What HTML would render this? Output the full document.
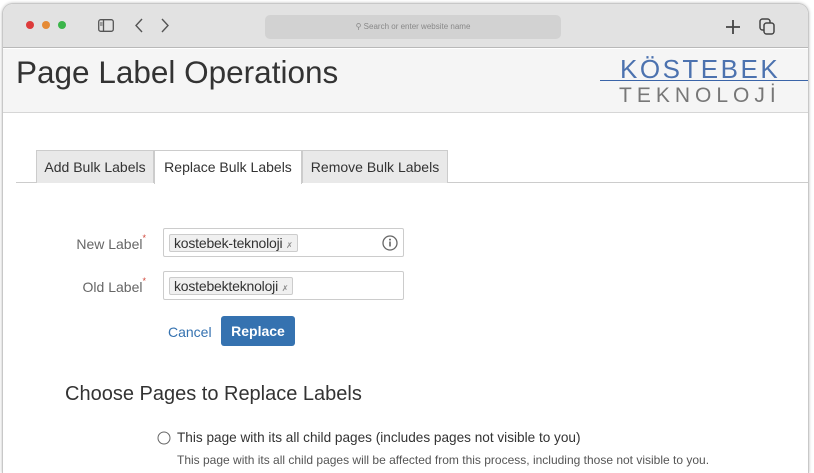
<!DOCTYPE html>
<html><head><meta charset="utf-8"><style>
*{margin:0;padding:0;box-sizing:border-box}
body{width:814px;height:463px;overflow:hidden;background:#fff;font-family:"Liberation Sans",Arial,sans-serif;position:relative}
.win{position:absolute;left:2px;top:3px;width:807px;height:470px;border-radius:11px 11px 0 0;background:#fff;border:1px solid #c8c8c8;border-bottom:none;overflow:hidden;box-shadow:0 0 3px rgba(0,0,0,.25)}
.bar{position:absolute;left:0;top:0;right:0;height:44px;background:#e2e2e2;border-bottom:1px solid #b9b9b9}
.dot{position:absolute;top:17px;width:8px;height:8px;border-radius:50%}
.url{position:absolute;left:262px;top:11px;width:296px;height:24px;border-radius:5px;background:#d2d2d2;font-size:8px;color:#888;text-align:center;line-height:24px}
.hdr{position:absolute;left:0;top:45px;right:0;height:64px;background:#f5f5f5;border-bottom:1px solid #d6d6d6}
.title{position:absolute;left:13px;top:5px;font-size:31.5px;color:#333}
.abs{position:absolute}
.tab{position:absolute;top:149px;height:33px;border:1px solid #ccc;border-bottom:none;background:#e9e9e9;font-size:14px;color:#333;line-height:32px;text-align:center}
.lbl{position:absolute;font-size:14px;color:#666;text-align:right;width:110px}
.lbl b{color:#d04437;font-size:9px;vertical-align:top;font-weight:normal;position:relative;top:-3px}
.inp{position:absolute;left:160px;width:241px;height:29px;border:1px solid #ccc;border-radius:2px;background:#fff}
.chip{position:absolute;left:5px;top:5px;height:18px;background:#f0f0f0;border:1px solid #ccc;border-radius:2px;font-size:14px;color:#333;line-height:16px;padding:0 4px;letter-spacing:-0.2px}
.chip i{font-style:normal;font-size:8px;color:#888}
</style></head><body>
<div class="win">
 <div class="bar">
  <div class="dot" style="left:23px;background:#dd3b3b"></div>
  <div class="dot" style="left:39px;background:#e58a35"></div>
  <div class="dot" style="left:55px;background:#3bb54a"></div>
  <svg class="abs" style="left:95px;top:15px" width="16" height="13"><rect x="0.7" y="0.7" width="14.6" height="11.6" rx="2" fill="none" stroke="#555" stroke-width="1.3"/><line x1="5.5" y1="1" x2="5.5" y2="12" stroke="#555" stroke-width="1.3"/><line x1="2" y1="4" x2="4.5" y2="4" stroke="#555"/><line x1="2" y1="6" x2="4.5" y2="6" stroke="#555"/></svg>
  <svg class="abs" style="left:132px;top:14px" width="40" height="15"><path d="M7 1 L1 7.5 L7 14" fill="none" stroke="#555" stroke-width="1.4"/><path d="M27 1 L33 7.5 L27 14" fill="none" stroke="#555" stroke-width="1.4"/></svg>
  <div class="url">&#9906; Search or enter website name</div>
  <svg class="abs" style="left:722px;top:15px" width="16" height="16"><path d="M8 1V15M1 8H15" stroke="#444" stroke-width="1.8"/></svg>
  <svg class="abs" style="left:756px;top:14px" width="17" height="18"><rect x="1" y="1" width="10" height="11" rx="2.5" fill="none" stroke="#444" stroke-width="1.5"/><rect x="5" y="5" width="10" height="11" rx="2.5" fill="#e2e2e2" stroke="#444" stroke-width="1.5"/></svg>
 </div>
 <div class="hdr">
  <div class="title">Page Label Operations</div>
  <div class="abs" style="left:617px;top:5px;font-size:26px;color:#3a64a8;letter-spacing:2.5px;font-weight:300;opacity:.9">KÖSTEBEK</div>
  <div class="abs" style="left:597px;top:31px;width:210px;height:1px;background:#3a64a8"></div>
  <div class="abs" style="left:616px;top:35px;font-size:21px;color:#777;letter-spacing:5px">TEKNOLOJİ</div>
 </div>
 <div class="abs" style="left:13px;top:178px;width:795px;height:1px;background:#ccc"></div>
 <div class="tab" style="left:33px;top:146px;width:118px">Add Bulk Labels</div>
 <div class="tab" style="left:151px;top:146px;width:148px;background:#fff;height:34px">Replace Bulk Labels</div>
 <div class="tab" style="left:299px;top:146px;width:146px">Remove Bulk Labels</div>
 <div class="lbl" style="left:33px;top:232px">New Label<b>*</b></div>
 <div class="inp" style="top:224px"><div class="chip">kostebek-teknoloji <i>&#10007;</i></div>
  <svg class="abs" style="left:218px;top:6px" width="16" height="16"><circle cx="8" cy="8" r="7" fill="none" stroke="#666" stroke-width="1.3"/><circle cx="8" cy="4.6" r="1" fill="#666"/><rect x="7.2" y="6.5" width="1.6" height="5" fill="#666"/></svg></div>
 <div class="lbl" style="left:33px;top:275px">Old Label<b>*</b></div>
 <div class="inp" style="top:267px"><div class="chip">kostebekteknoloji <i>&#10007;</i></div></div>
 <div class="abs" style="left:165px;top:320px;font-size:14px;color:#3572b0">Cancel</div>
 <div class="abs" style="left:218px;top:312px;width:74px;height:30px;background:#3572b0;border-radius:3px;color:#fff;font-weight:bold;font-size:14px;line-height:30px;text-align:center">Replace</div>
 <div class="abs" style="left:62px;top:379px;font-size:20px;color:#333">Choose Pages to Replace Labels</div>
 <svg class="abs" style="left:154px;top:427px" width="14" height="14"><circle cx="7" cy="7" r="6" fill="#fff" stroke="#666"/></svg>
 <div class="abs" style="left:174px;top:426px;font-size:13.6px;color:#333">This page with its all child pages (includes pages not visible to you)</div>
 <div class="abs" style="left:174px;top:449px;font-size:12px;color:#555">This page with its all child pages will be affected from this process, including those not visible to you.</div>
</div>
</body></html>
